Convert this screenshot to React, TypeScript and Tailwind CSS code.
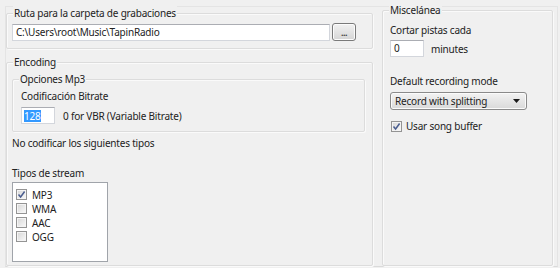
import React from "react";

function GroupBox({
  label,
  className,
  labelClass,
  children,
}: {
  label: string;
  className: string;
  labelClass?: string;
  children?: React.ReactNode;
}) {
  return (
    <div
      className={
        "relative border border-[#dcdcdc] rounded-[2px] shadow-[inset_1px_1px_0_#fafafa,1px_1px_0_#fafafa] " +
        className
      }
    >
      <span
        className={
          "absolute top-[-8px] bg-[#f0f0f0] px-[1px] leading-[14px] whitespace-nowrap " +
          (labelClass ?? "left-[6px]")
        }
      >
        {label}
      </span>
      {children}
    </div>
  );
}

function CheckBox({ checked }: { checked?: boolean }) {
  return (
    <div className="relative w-[11px] h-[11px] shrink-0 border border-[#949494] bg-gradient-to-br from-[#d6d6d6] to-[#fafafa] shadow-[inset_0_0_0_1px_#f4f4f4]">
      {checked && (
        <svg
          className="absolute left-[0px] top-[0px]"
          width="9"
          height="9"
          viewBox="0 0 9 9"
        >
          <path
            d="M1.5 4.5 L3.6 7 L7.6 1.5"
            fill="none"
            stroke="#4a5d8f"
            strokeWidth="1.5"
          />
        </svg>
      )}
    </div>
  );
}

export default function App() {
  return (
    <div
      className="w-[560px] h-[268px] bg-[#f0f0f0] text-[10px] tracking-[-0.2px] text-[#222] overflow-hidden pt-[6px] pl-[5px]"
      style={{ fontFamily: '"Noto Sans", "Liberation Sans", sans-serif' }}
    >
      <div className="w-[553px] h-[261px] border border-[#e4e4e4] border-b-[#dadada] flex">
        {/* Left column */}
        <div className="w-[367px] flex flex-col">
          <GroupBox
            label="Ruta para la carpeta de grabaciones"
            className="mt-[6px] h-[36px] shrink-0"
          >
            <div className="flex items-start pt-[10px] pl-[5px]">
              <div className="w-[318px] h-[17px] bg-white border border-[#d3d6dc] border-t-[#abadb3] pl-[3px] leading-[15px] whitespace-nowrap">
                C:\Users\root\Music\TapinRadio
              </div>
              <div className="ml-[2px] -mt-[1px] w-[24px] h-[18px] rounded-[3px] border border-[#7a7a7a] bg-gradient-to-b from-[#f2f2f2] to-[#d5d5d5] shadow-[inset_0_0_0_1px_#fcfcfc] flex items-center justify-center text-[9px] leading-[9px] text-[#444] font-bold tracking-[-0.5px]">
                ...
              </div>
            </div>
          </GroupBox>

          <GroupBox
            label="Encoding"
            className="mt-[13px] flex-1 flex flex-col"
          >
            <GroupBox
              label="Opciones Mp3"
              className="mt-[16px] ml-[5px] mr-[7px] h-[53px] shrink-0"
              labelClass="left-[6px]"
            >
              <div className="pl-[8px] pt-[9px] leading-[14px] whitespace-nowrap">
                Codificación Bitrate
              </div>
              <div className="flex items-center pl-[8px] mt-[4px]">
                <div className="w-[34px] h-[17px] bg-white border border-[#d3d6dc] border-t-[#abadb3] pl-[2px] flex items-center">
                  <span className="bg-[#3399ff] text-white leading-[12px]">
                    128
                  </span>
                </div>
                <span className="ml-[8px] leading-[14px] whitespace-nowrap">
                  0 for VBR (Variable Bitrate)
                </span>
              </div>
            </GroupBox>

            <div className="ml-[5px] mt-[4px] leading-[14px] whitespace-nowrap">
              No codificar los siguientes tipos
            </div>
            <div className="ml-[5px] mt-[16px] leading-[14px] whitespace-nowrap">
              Tipos de stream
            </div>
            <div className="ml-[5px] mt-[2px] w-[96px] h-[80px] bg-white border border-[#a0a4aa] pt-[4px] pl-[3px] flex flex-col">
              {[
                ["MP3", true],
                ["WMA", false],
                ["AAC", false],
                ["OGG", false],
              ].map(([name, checked]) => (
                <div
                  key={name as string}
                  className="flex items-center h-[15px] -mt-[1px] first:mt-0"
                >
                  <CheckBox checked={checked as boolean} />
                  <span className="ml-[5px] leading-[14px]">
                    {name as string}
                  </span>
                </div>
              ))}
            </div>
          </GroupBox>
        </div>

        {/* Right column */}
        <GroupBox
          label="Miscelánea"
          className="ml-[9px] mt-[3px] w-[171px] flex flex-col pl-[7px]"
        >
          <div className="mt-[12px] leading-[14px] whitespace-nowrap">
            Cortar pistas cada
          </div>
          <div className="flex items-center mt-[3px]">
            <div className="w-[34px] h-[17px] bg-white border border-[#d3d6dc] border-t-[#abadb3] pl-[3px] leading-[15px]">
              0
            </div>
            <span className="ml-[7px] leading-[14px]">minutes</span>
          </div>
          <div className="mt-[17px] leading-[14px] whitespace-nowrap">
            Default recording mode
          </div>
          <div className="mt-[4px] w-[137px] h-[18px] rounded-[3px] border border-[#8a8a8a] bg-gradient-to-b from-[#f3f3f3] to-[#d9d9d9] shadow-[inset_0_0_0_1px_#fbfbfb] flex items-center pl-[4px] pr-[6px]">
            <span className="flex-1 leading-[14px] whitespace-nowrap">
              Record with splitting
            </span>
            <svg width="7" height="4" viewBox="0 0 7 4">
              <path d="M0 0 L7 0 L3.5 4 Z" fill="#1a1a1a" />
            </svg>
          </div>
          <div className="flex items-center mt-[9px] ml-[1px]">
            <CheckBox checked />
            <span className="ml-[4px] leading-[14px] whitespace-nowrap">
              Usar song buffer
            </span>
          </div>
        </GroupBox>
      </div>
    </div>
  );
}
